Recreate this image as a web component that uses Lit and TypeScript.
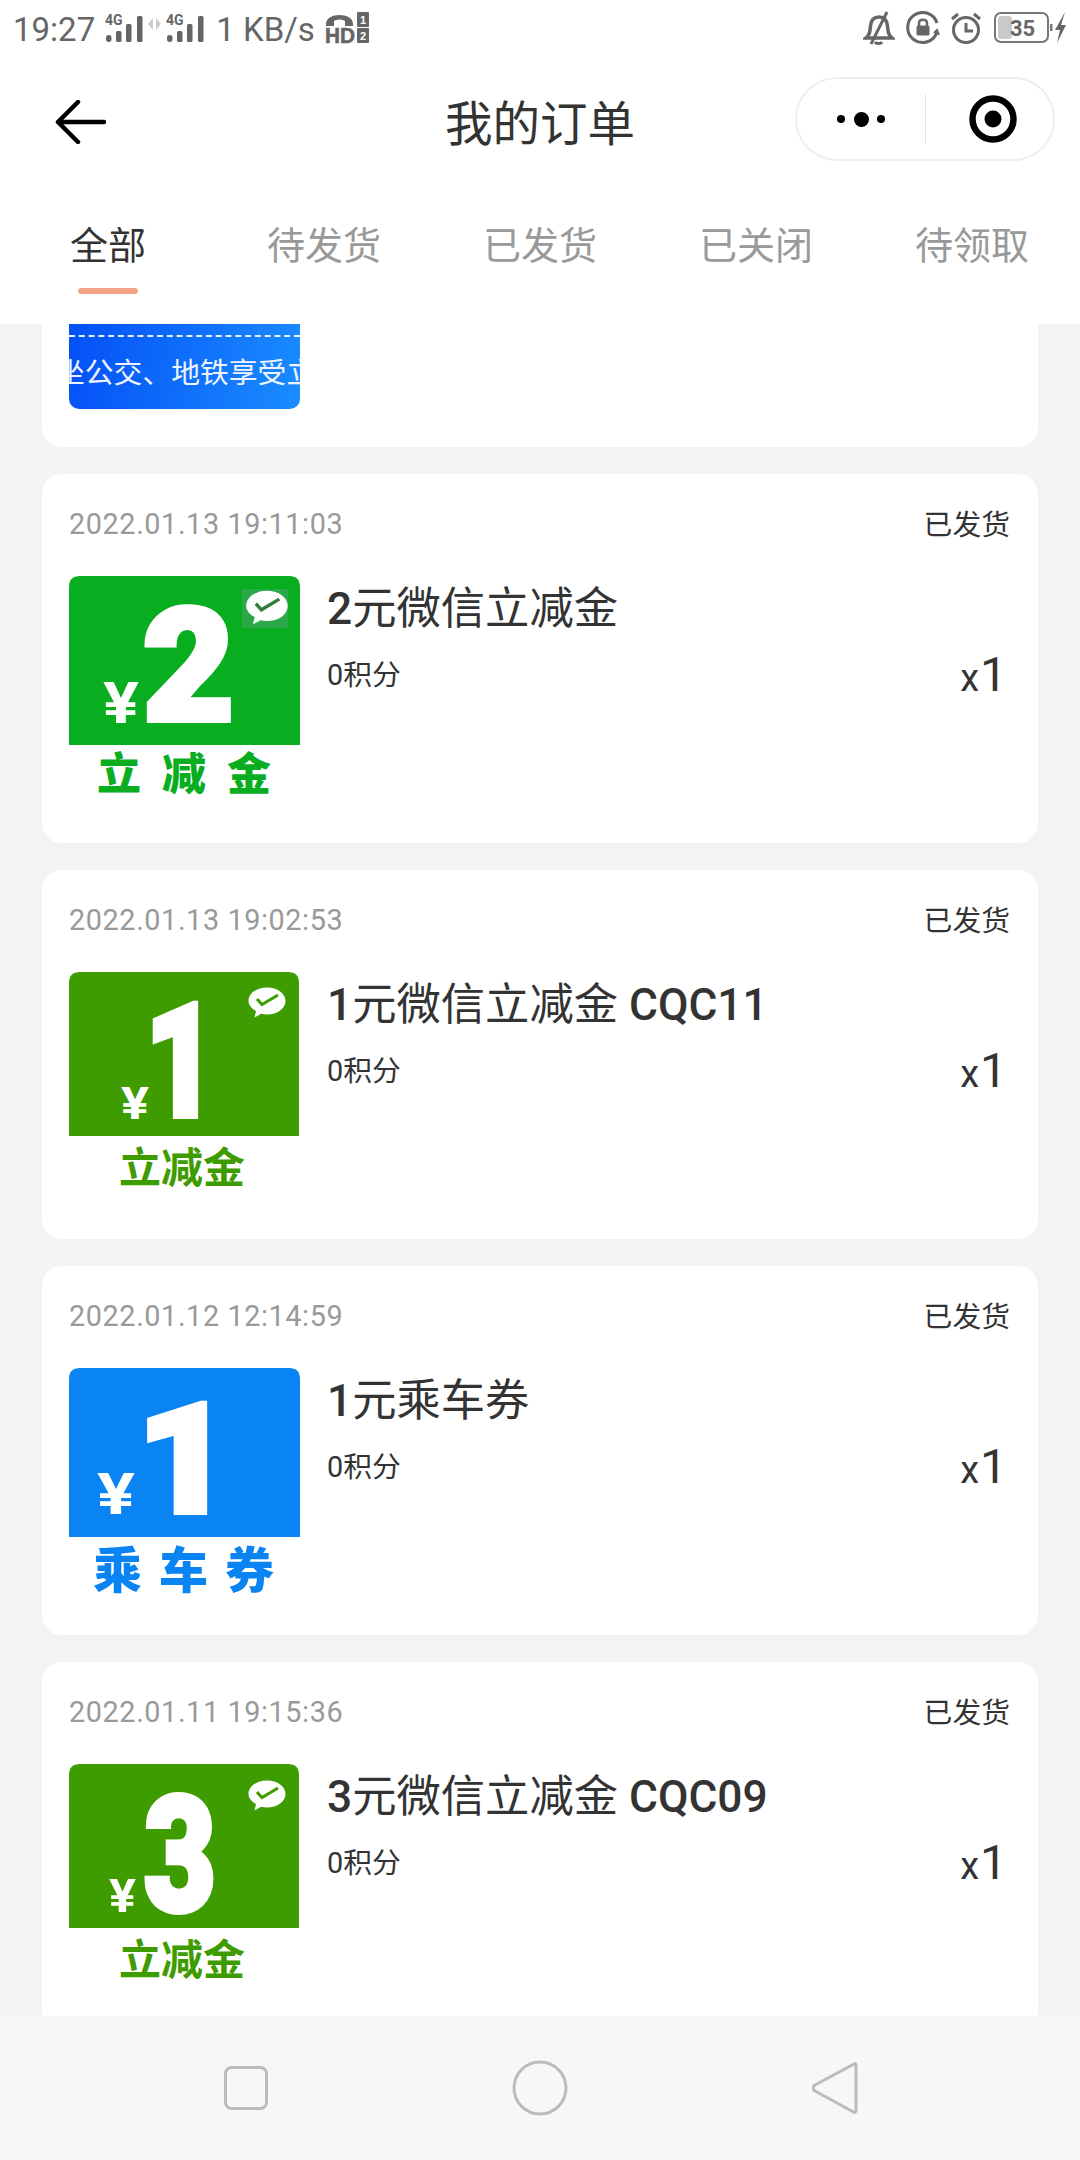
import { LitElement, html, css, svg } from "lit";
import { customElement } from "lit/decorators.js";

interface Voucher {
  color: string; h: number; w: number; digit: string; dx: number; dw: number; dy: number; ds: number;
  yx: number; yw: number; yy: number; ys: number; label: string; lx: string; ly: number; ls: number; lw: number;
  by: number; bs: number; badgeBg: boolean;
}
const G = "#3f9c00";
const orders: { date: string; title: string; v: Voucher }[] = [
  { date: "2022.01.13 19:11:03", title: "2元微信立减金",
    v: { color: "#08ae1f", h: 169, w: 231, digit: "2", dx: 74, dw: 91, dy: 144, ds: 155, yx: 34, yw: 36, yy: 147, ys: 58, label: "立减金", lx: "28 93 158", ly: 214, ls: 44, lw: 900, by: 31, bs: 1.12, badgeBg: true } },
  { date: "2022.01.13 19:02:53", title: "1元微信立减金 CQC11",
    v: { color: G, h: 164, w: 230, digit: "1", dx: 76, dw: 72, dy: 144, ds: 158, yx: 52, yw: 28, yy: 147, ys: 44, label: "立减金", lx: "50 92 134", ly: 211, ls: 42, lw: 700, by: 30, bs: 1, badgeBg: false } },
  { date: "2022.01.12 12:14:59", title: "1元乘车券",
    v: { color: "#0984f2", h: 169, w: 231, digit: "1", dx: 68, dw: 95, dy: 144, ds: 153, yx: 28, yw: 38, yy: 146, ys: 58, label: "乘车券", lx: "24 90 156", ly: 220, ls: 49, lw: 900, by: -99, bs: 1, badgeBg: false } },
  { date: "2022.01.11 19:15:36", title: "3元微信立减金 CQC09",
    v: { color: G, h: 164, w: 230, digit: "3", dx: 75, dw: 72, dy: 146, ds: 160, yx: 40, yw: 27, yy: 148, ys: 46, label: "立减金", lx: "50 92 134", ly: 211, ls: 42, lw: 700, by: 31, bs: 1, badgeBg: false } },
];
const tabs = ["全部", "待发货", "已发货", "已关闭", "待领取"];

function signal() {
  return html`<svg class="sig" width="38" height="38" viewBox="0 -4 38 38">
    <text class="sig-t" x="0" y="11">4G</text>
    <rect x="1" y="21" width="5.500" height="7" rx="2.700" fill="#666"/>
    <rect x="11" y="17" width="5.500" height="11" rx="1.500" fill="#666"/>
    <rect x="21" y="10" width="5.500" height="18" rx="1.500" fill="#666"/>
    <rect x="32" y="2" width="5.500" height="26" rx="1.500" fill="#666"/>
  </svg>`;
}

function voucher(v: Voucher) {
  const r = 11;
  const bgPath = `M0 ${v.h}V${r}Q0 0 ${r} 0H${v.w - r}Q${v.w} 0 ${v.w} ${r}V${v.h}Z`;
  return html`<svg class="vimg" width="231" height="231" viewBox="0 0 231 231">
    <path d=${bgPath} fill=${v.color}/>
    ${v.badgeBg ? svg`<rect x="173" y="13" width="46" height="39" fill="#2aa84a"/>` : ""}
    ${v.by > 0 ? svg`<g transform="translate(198 ${v.by}) scale(${v.bs})">
      <path d="M0-14.5C10.500-14.500 18.500-8.500 18.500-1 18.500 6.500 10.500 12.500 0 12.500 -2 12.500 -4 12.300 -5.800 11.800L-12.500 15.500 -11 9C-15.500 6.500 -18.500 3 -18.500 -1 -18.500 -8.500 -10.500 -14.500 0 -14.500Z" fill="#fff"/>
      <path d="M-10-3L-5 2.500 11-7" fill="none" stroke=${v.badgeBg ? "#2f7d3a" : v.color} stroke-width="3"/>
    </g>` : ""}
    <text class="v-digit" x=${v.dx} y=${v.dy} font-size=${v.ds} textLength=${v.dw} lengthAdjust="spacingAndGlyphs">${v.digit}</text>
    <text class="v-yen" x=${v.yx} y=${v.yy} font-size=${v.ys} textLength=${v.yw} lengthAdjust="spacingAndGlyphs">¥</text>
    <text class="v-label" x=${v.lx} y=${v.ly} font-size=${v.ls} font-weight=${v.lw} fill=${v.color}>${v.label}</text>
  </svg>`;
}

function titleParts(t: string) {
  return t.split(/([0-9A-Z]+)/).map((p) => (/^[0-9A-Z]+$/.test(p) ? html`<span class="lat">${p}</span>` : p));
}

@customElement("app-root")
export class AppRoot extends LitElement {
  static styles = css`
    :host { display: flex; flex-direction: column; width: 1080px; height: 2160px; overflow: hidden; background: #f3f3f3; font-family: Roboto, "Noto Sans CJK SC", sans-serif; color: #333; }
    header { background: #fff; height: 324px; flex: none; display: flex; flex-direction: column; }
    .status { height: 56px; display: flex; align-items: center; justify-content: space-between; color: #666; padding: 0 13px 0 13px; flex: none; }
    .st-l, .st-r { display: flex; align-items: center; }
    .time { font-size: 33px; margin-right: 10px; margin-top: 2px; }
    .sig { display: block; margin-top: 1px; }
    .sig-t { font: 700 14px Roboto, sans-serif; fill: #666; }
    .arrows { margin: -8px 5px 0 5px; }
    .speed { font-size: 33px; margin: 2px 10px 0 12px; }
    .st-l svg, .st-r svg { display: block; }
    .hd-t { font: 900 22px "Liberation Sans", sans-serif; fill: #666; stroke: #666; stroke-width: 0.600px; }
    .hd-n { font: 900 11px "Liberation Sans", sans-serif; fill: #fff; }
    .bat-t { font: 700 22px Roboto, sans-serif; fill: #666; }
    .nav { height: 96px; margin-top: 18px; display: grid; grid-template-columns: 1fr auto 1fr; align-items: center; flex: none; }
    .back { margin-left: 54px; display: block; }
    .ttl { font-size: 47.500px; line-height: 60px; margin-top: 6px; }
    .capsule { justify-self: end; margin: -6px 25px 0 0; width: 260px; height: 84px; box-sizing: border-box; border: 2px solid #eee; border-radius: 42px; display: flex; align-items: center; }
    .dots { width: 128px; display: flex; align-items: center; justify-content: center; gap: 8.500px; box-sizing: border-box; }
    .dot { width: 8px; height: 8px; background: #000; border-radius: 50%; }
    .dot.big { width: 15px; height: 15px; }
    .sep { width: 1px; height: 50px; background: #e5e5e5; }
    .tgt { margin-left: 43px; display: block; }
    .tabs { display: flex; flex: none; }
    .tab { flex: 1; display: flex; flex-direction: column; align-items: center; padding-top: 51px; font-size: 38px; line-height: 50px; color: #999; }
    .tab.on { color: #333; }
    .bar { width: 60px; height: 6px; border-radius: 3px; margin-top: 17px; }
    .tab.on .bar { background: #f2a585; }
    main { flex: 1; min-height: 0; overflow: hidden; display: flex; flex-direction: column; gap: 27px; padding: 0 42px 0 42px; }
    .card { background: #fff; border-radius: 20px; padding: 27px 28px 36px 27px; flex: none; }
    .card.first { border-radius: 0 0 20px 20px; padding: 0 28px 38px 27px; }
    .strip { width: 231px; height: 85px; overflow: hidden; box-sizing: border-box; border-radius: 0 0 10px 10px; background: linear-gradient(100deg, #0450f6, #1a8cff); padding-top: 11px; }
    .dash { border-top: 2px dashed #e8f0ff; }
    .strip-t { color: #eef4ff; font-size: 28.800px; line-height: 40px; white-space: nowrap; margin: 16px 0 0 -13px; }
    .head { display: flex; justify-content: space-between; align-items: center; height: 44px; margin-bottom: 31px; }
    .date { font-size: 28.800px; letter-spacing: 0.600px; color: #999; margin-top: 1px; }
    .state { font-size: 28.800px; color: #333; margin-top: -2px; }
    .body { display: flex; height: 231px; }
    .vimg { display: block; flex: none; }
    .v-digit { font-family: Roboto, sans-serif; font-weight: 900; fill: #fff; stroke: #fff; stroke-width: 6px; }
    .v-yen { font-family: Roboto, sans-serif; font-weight: 700; fill: #fff; }
    .v-label { font-family: "Noto Sans CJK SC", sans-serif; }
    .info { flex: 1; margin-left: 27px; display: flex; flex-direction: column; }
    .name { font-size: 44.300px; line-height: 60px; margin-top: 3px; color: #333; }
    .lat { font-weight: 500; }
    .pts { font-size: 28.800px; line-height: 40px; margin-top: 16px; }
    .qty { align-self: flex-start; margin-top: 69px; line-height: 60px; color: #333; font-size: 38px; padding-right: 3px; white-space: nowrap; }
    .qty b { font-weight: 400; font-size: 48px; margin-left: 1px; }
    footer { height: 144px; flex: none; background: #f7f7f7; display: flex; align-items: center; justify-content: space-between; padding: 0 222px 0 224px; }
    footer svg { display: block; }
  `;

  render() {
    return html`
      <header>
        <div class="status">
          <div class="st-l">
            <span class="time">19:27</span>
            ${signal()}
            <svg class="arrows" width="13" height="12" viewBox="0 0 13 12"><path d="M5 0V12L0 6ZM8 0V12L13 6Z" fill="#ccc"/></svg>
            ${signal()}
            <span class="speed">1 KB/s</span>
            <svg width="44" height="38" viewBox="0 -3 44 38">
              <path d="M1 12C1 0 28 0 28 12V14H20V9C16 7 13 7 9 9V14H1Z" fill="#666"/>
              <text class="hd-t" x="0" y="31" textLength="30" lengthAdjust="spacingAndGlyphs">HD</text>
              <rect x="32" y="0" width="12" height="15" rx="1" fill="#666"/><text class="hd-n" x="35" y="12">1</text>
              <rect x="32" y="16" width="12" height="15" rx="1" fill="#666"/><text class="hd-n" x="35" y="28">2</text>
            </svg>
          </div>
          <div class="st-r">
            <svg width="32" height="34" viewBox="0 0 32 34" fill="none" stroke="#666" stroke-width="3.500">
              <path d="M3 27C7 24 7 20 7.500 15 8 9 11 6 16 6 21 6 24 9 24.500 15 25 20 25 24 29 27Z"/>
              <path d="M12 31C13 33 18 33 19 31" stroke-width="3"/>
              <path d="M24 1L8 33" stroke-width="3"/>
            </svg>
            <svg style="margin-left:11px" width="34" height="34" viewBox="0 0 34 34" fill="none" stroke="#666" stroke-width="3">
              <path d="M31 21A15 15 0 1 1 31 12"/>
              <path d="M28 22L31 19 33 24" stroke-width="2"/>
              <rect x="10.500" y="14.500" width="13" height="10" rx="1.500" fill="#666" stroke="none"/>
              <path d="M13 15V12C13 7.500 21 7.500 21 12V15" stroke-width="2.500"/>
            </svg>
            <svg style="margin-left:10px" width="32" height="34" viewBox="0 0 32 34" fill="none" stroke="#666" stroke-width="3">
              <circle cx="16" cy="19" r="12.500"/>
              <path d="M16 12V20H23"/>
              <path d="M2 8L8 3M30 8L24 3"/>
            </svg>
            <svg style="margin-left:12px" width="73" height="32" viewBox="0 0 73 32">
              <rect x="1" y="1" width="53" height="29" rx="6" fill="none" stroke="#777" stroke-width="2"/>
              <rect x="4" y="4" width="14" height="23" rx="3" fill="#c9c9c9"/>
              <text class="bat-t" x="16" y="24">35</text>
              <rect x="56" y="12" width="2.500" height="7" fill="#777"/>
              <path d="M71 0L61 18H66L63 31 72 13H67Z" fill="#666"/>
            </svg>
          </div>
        </div>
        <div class="nav">
          <svg class="back" width="52" height="44" viewBox="0 0 52 44" fill="none" stroke="#000" stroke-width="4.500" stroke-linecap="round" stroke-linejoin="round">
            <path d="M24 2L4 22 24 42M4 22H50"/>
          </svg>
          <div class="ttl">我的订单</div>
          <div class="capsule">
            <div class="dots"><span class="dot"></span><span class="dot big"></span><span class="dot"></span></div>
            <div class="sep"></div>
            <svg class="tgt" width="48" height="48" viewBox="0 0 48 48"><circle cx="24" cy="24" r="20.500" fill="none" stroke="#000" stroke-width="6.500"/><circle cx="24" cy="24" r="8.500" fill="#000"/></svg>
          </div>
        </div>
        <div class="tabs">
          ${tabs.map((t, i) => html`<div class="tab ${i === 0 ? "on" : ""}">${t}<span class="bar"></span></div>`)}
        </div>
      </header>
      <main>
        <div class="card first">
          <div class="strip"><div class="dash"></div><div class="strip-t">坐公交、地铁享受立减优惠</div></div>
        </div>
        ${orders.map((o) => html`
          <div class="card">
            <div class="head"><span class="date">${o.date}</span><span class="state">已发货</span></div>
            <div class="body">
              ${voucher(o.v)}
              <div class="info">
                <div class="name">${titleParts(o.title)}</div>
                <div class="pts">0积分</div>
              </div>
              <div class="qty">x<b>1</b></div>
            </div>
          </div>`)}
      </main>
      <footer>
        <svg width="44" height="44" viewBox="0 0 44 44"><rect x="1.500" y="1.500" width="41" height="41" rx="6" fill="none" stroke="#bbb" stroke-width="3"/></svg>
        <svg width="56" height="56" viewBox="0 0 56 56"><circle cx="28" cy="28" r="26" fill="none" stroke="#bbb" stroke-width="3"/></svg>
        <svg width="46" height="54" viewBox="0 0 46 54"><path d="M42 3C43.500 2 44 3 44 5V49C44 51 43 52 41.500 51L3 30C0.500 28 0.500 26 3 24Z" fill="none" stroke="#bbb" stroke-width="3" stroke-linejoin="round"/></svg>
      </footer>
    `;
  }
}
